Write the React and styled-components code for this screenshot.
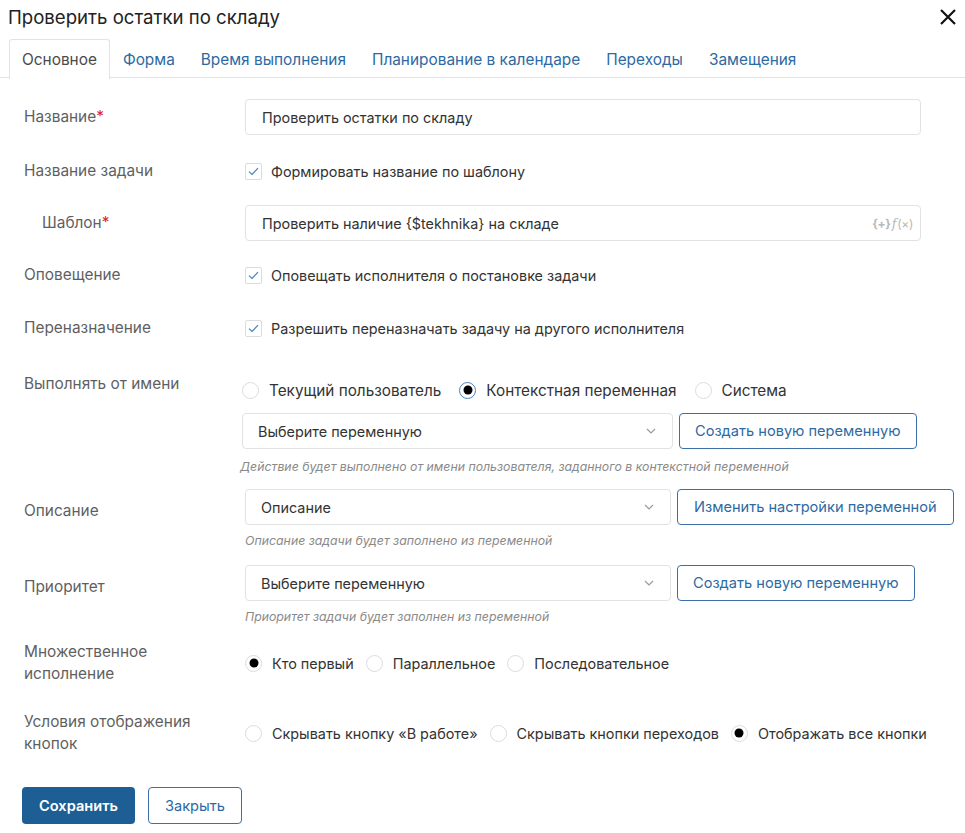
import styled, { createGlobalStyle, css } from "styled-components";

const GlobalStyle = createGlobalStyle`
  html, body {
    margin: 0;
    padding: 0;
    background: #fff;
  }
  body {
    font-family: Inter, "Noto Sans", "Liberation Sans", sans-serif;
    color: #333;
  }
`;

const tabs = [
  "Основное",
  "Форма",
  "Время выполнения",
  "Планирование в календаре",
  "Переходы",
  "Замещения",
];

function CheckIcon() {
  return (
    <svg width="11" height="9" viewBox="0 0 11 9" fill="none">
      <path d="M1 4.6L4 7.5L10 1.2" stroke="#4a7fb8" strokeWidth="1.2" />
    </svg>
  );
}

function Chevron() {
  return (
    <svg width="10" height="6" viewBox="0 0 10 6" fill="none">
      <path d="M1 1L5 5L9 1" stroke="#9a9a9a" strokeWidth="1.2" />
    </svg>
  );
}

function Check({ children }) {
  return (
    <CheckLine>
      <CheckBox>
        <CheckIcon />
      </CheckBox>
      {children}
    </CheckLine>
  );
}

function Radio({ checked, ring, children }) {
  return (
    <RadioItem>
      <RadioCircle $checked={checked} $ring={ring} />
      {children}
    </RadioItem>
  );
}

function Select({ value, width }) {
  return (
    <SelectBox $w={width}>
      <span>{value}</span>
      <Chevron />
    </SelectBox>
  );
}

export default function App() {
  return (
    <>
      <GlobalStyle />
      <Dialog>
        <Header>
          <Title>Проверить остатки по складу</Title>
          <CloseBtn aria-label="close">
            <svg width="18" height="18" viewBox="0 0 18 18">
              <path d="M2 2L16 16M16 2L2 16" stroke="#111" strokeWidth="2.2" />
            </svg>
          </CloseBtn>
        </Header>

        <TabBar>
          {tabs.map((t, i) => (
            <Tab key={t} $active={i === 0}>
              {t}
            </Tab>
          ))}
        </TabBar>

        <Form>
          <Row $mt={21}>
            <Label>
              Название<Req>*</Req>
            </Label>
            <Input>Проверить остатки по складу</Input>
          </Row>

          <Row $mt={18}>
            <Label>Название задачи</Label>
            <Check>Формировать название по шаблону</Check>
          </Row>

          <Row $mt={16}>
            <Label $indent>
              Шаблон<Req>*</Req>
            </Label>
            <Input>
              Проверить наличие {"{$tekhnika}"} на складе
              <FormulaIcon>
                <b>{"{+}"}</b>
                <i>f</i>(×)
              </FormulaIcon>
            </Input>
          </Row>

          <Row $mt={16}>
            <Label>Оповещение</Label>
            <Check>Оповещать исполнителя о постановке задачи</Check>
          </Row>

          <Row $mt={17}>
            <Label>Переназначение</Label>
            <Check>Разрешить переназначать задачу на другого исполнителя</Check>
          </Row>

          <Row $mt={27} $top>
            <Label>Выполнять от имени</Label>
            <Block $shift={-3}>
              <RadioGroup $size={15.3}>
                <Radio>Текущий пользователь</Radio>
                <Radio checked ring>
                  Контекстная переменная
                </Radio>
                <Radio>Система</Radio>
              </RadioGroup>
              <SelectRow>
                <Select value="Выберите переменную" width={431} />
                <OutlineButton>Создать новую переменную</OutlineButton>
              </SelectRow>
              <Hint $ml={-2} $mt={10}>
                Действие будет выполнено от имени пользователя, заданного в
                контекстной переменной
              </Hint>
            </Block>
          </Row>

          <Row $mt={14} $top>
            <Label $pt={11}>Описание</Label>
            <Block>
              <SelectRow>
                <Select value="Описание" width={426} />
                <OutlineButton $pad={16}>Изменить настройки переменной</OutlineButton>
              </SelectRow>
              <Hint>Описание задачи будет заполнено из переменной</Hint>
            </Block>
          </Row>

          <Row $mt={16} $top>
            <Label $pt={11}>Приоритет</Label>
            <Block>
              <SelectRow>
                <Select value="Выберите переменную" width={426} />
                <OutlineButton>Создать новую переменную</OutlineButton>
              </SelectRow>
              <Hint>Приоритет задачи будет заполнен из переменной</Hint>
            </Block>
          </Row>

          <Row $mt={16}>
            <Label>
              Множественное
              <br />
              исполнение
            </Label>
            <RadioGroup $gap={12}>
              <Radio checked>Кто первый</Radio>
              <Radio>Параллельное</Radio>
              <Radio>Последовательное</Radio>
            </RadioGroup>
          </Row>

          <Row $mt={26}>
            <Label>
              Условия отображения
              <br />
              кнопок
            </Label>
            <RadioGroup $gap={12}>
              <Radio>Скрывать кнопку «В работе»</Radio>
              <Radio>Скрывать кнопки переходов</Radio>
              <Radio checked>Отображать все кнопки</Radio>
            </RadioGroup>
          </Row>
        </Form>

        <Footer>
          <PrimaryButton>Сохранить</PrimaryButton>
          <OutlineButton $small $pad={16}>
            Закрыть
          </OutlineButton>
        </Footer>
      </Dialog>
    </>
  );
}

const Dialog = styled.div`
  width: 965px;
  height: 833px;
  box-sizing: border-box;
  background: #fff;
  overflow: hidden;
`;

const Header = styled.div`
  display: flex;
  align-items: center;
  justify-content: space-between;
  height: 33px;
  padding: 0 7px 0 8px;
`;

const Title = styled.h1`
  margin: 0;
  font-size: 18.6px;
  font-weight: 400;
  color: #222;
`;

const CloseBtn = styled.button`
  border: 0;
  background: none;
  padding: 0;
  width: 20px;
  height: 20px;
  display: flex;
  align-items: center;
  justify-content: center;
  cursor: pointer;
`;

const TabBar = styled.div`
  display: flex;
  margin-top: 6px;
  padding-left: 9px;
  border-bottom: 1px solid #e3e3e3;
  height: 38px;
`;

const Tab = styled.div`
  display: flex;
  align-items: center;
  padding: 0 12px;
  font-size: 15.4px;
  color: #2d6aa3;
  border: 1px solid transparent;
  border-bottom: 0;
  border-radius: 3px 3px 0 0;
  margin-bottom: -1px;
  white-space: nowrap;

  ${(p) =>
    p.$active &&
    css`
      color: #4a4a4a;
      background: #fff;
      border-color: #e3e3e3;
      height: 39px;
    `}
`;

const Form = styled.div`
  display: flex;
  flex-direction: column;
  padding-left: 24px;
`;

const Row = styled.div`
  display: grid;
  grid-template-columns: 221px 1fr;
  align-items: ${(p) => (p.$top ? "start" : "center")};
  min-height: 36px;
  margin-top: ${(p) => p.$mt || 0}px;
`;

const Label = styled.div`
  font-size: 15.4px;
  line-height: 22px;
  color: #5f5f5f;
  padding-left: ${(p) => (p.$indent ? 18 : 0)}px;
  padding-top: ${(p) => p.$pt || 0}px;
`;

const Req = styled.span`
  color: #d9262b;
`;

const Input = styled.div`
  position: relative;
  width: 676px;
  height: 36px;
  box-sizing: border-box;
  border: 1px solid #e2e2e2;
  border-radius: 4px;
  display: flex;
  align-items: center;
  padding: 0 16px;
  font-size: 14.4px;
  color: #333;
`;

const FormulaIcon = styled.span`
  position: absolute;
  right: 7px;
  top: 50%;
  transform: translateY(-50%);
  font-size: 12px;
  color: #b8b8b8;
  letter-spacing: -0.3px;

  b {
    font-weight: 700;
  }
  i {
    font-family: "DejaVu Serif", serif;
    font-size: 13px;
    margin: 0 1px;
  }
`;

const CheckLine = styled.div`
  display: flex;
  align-items: center;
  gap: 9px;
  font-size: 14.4px;
  color: #333;
  white-space: nowrap;
`;

const CheckBox = styled.span`
  width: 17px;
  height: 17px;
  box-sizing: border-box;
  border: 1px solid #dcdcdc;
  border-radius: 2px;
  display: flex;
  align-items: center;
  justify-content: center;
`;

const Block = styled.div`
  display: flex;
  flex-direction: column;
  margin-left: ${(p) => p.$shift || 0}px;
`;

const RadioGroup = styled.div`
  display: flex;
  align-items: center;
  gap: ${(p) => p.$gap || 18}px;
  height: 34px;
  font-size: ${(p) => p.$size || 14.4}px;
`;

const RadioItem = styled.div`
  display: flex;
  align-items: center;
  gap: 10px;
  color: #333;
  white-space: nowrap;
`;

const RadioCircle = styled.span`
  width: 17px;
  height: 17px;
  box-sizing: border-box;
  border-radius: 50%;
  border: 1px solid ${(p) => (p.$ring ? "#4d7fb5" : "#dcdcdc")};
  position: relative;
  flex-shrink: 0;

  ${(p) =>
    p.$checked &&
    css`
      &::after {
        content: "";
        position: absolute;
        left: 50%;
        top: 50%;
        width: 9px;
        height: 9px;
        border-radius: 50%;
        background: #000;
        transform: translate(-50%, -50%);
      }
    `}
`;

const SelectRow = styled.div`
  display: flex;
  align-items: center;
  gap: 6px;

  ${RadioGroup} + & {
    margin-top: 6px;
  }
`;

const SelectBox = styled.div`
  width: ${(p) => p.$w || 426}px;
  height: 36px;
  box-sizing: border-box;
  border: 1px solid #e2e2e2;
  border-radius: 4px;
  display: flex;
  align-items: center;
  justify-content: space-between;
  padding: 0 16px 0 15px;
  font-size: 14.4px;
  color: #333;
`;

const Hint = styled.div`
  font-size: 12.3px;
  font-style: italic;
  color: #8a8a8a;
  line-height: 16px;
  margin-top: ${(p) => p.$mt || 8}px;
  margin-left: ${(p) => p.$ml || 0}px;
`;

const OutlineButton = styled.button`
  height: ${(p) => (p.$small ? 37 : 36)}px;
  box-sizing: border-box;
  padding: 0 ${(p) => p.$pad || 15}px;
  border: 1px solid #3c6fa6;
  border-radius: 4px;
  background: #fff;
  color: #2d6aa3;
  font-family: inherit;
  font-size: 14.6px;
  white-space: nowrap;
  cursor: pointer;
`;

const PrimaryButton = styled.button`
  height: 37px;
  box-sizing: border-box;
  padding: 0 17px;
  border: 0;
  border-radius: 4px;
  background: #1d5f95;
  color: #fff;
  font-family: inherit;
  font-size: 14.6px;
  font-weight: 600;
  cursor: pointer;
`;

const Footer = styled.div`
  display: flex;
  gap: 13px;
  padding-left: 22px;
  margin-top: 32px;
`;
